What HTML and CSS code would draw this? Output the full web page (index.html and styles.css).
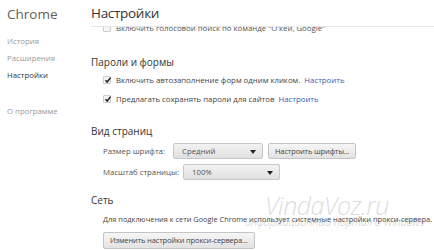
FILE: index.html
```html
<!DOCTYPE html>
<html lang="ru">
<head>
<meta charset="utf-8">
<link rel="stylesheet" href="styles.css">
</head>
<body>
<div class="page">
  <nav class="side">
    <div class="brand">Chrome</div>
    <div class="nav-item">История</div>
    <div class="nav-item">Расширения</div>
    <div class="nav-item active">Настройки</div>
    <div class="nav-item about">О программе</div>
  </nav>
  <main class="main">
    <header class="head">Настройки</header>
    <div class="clip">
      <div class="row cut"><span class="cb"></span><span>Включить голосовой поиск по команде "О'кей, Google"</span></div>
    </div>
    <section class="sec pw">
      <h2 class="sec-title">Пароли и формы</h2>
      <div class="row r1"><span class="cb on"><svg viewBox="0 0 8 8" width="8" height="8"><path d="M1.5 4.2 L3.2 6 L6.6 1.6" fill="none" stroke="#222" stroke-width="1.5"/></svg></span><span>Включить автозаполнение форм одним кликом.</span><a class="link">Настроить</a></div>
      <div class="row r2"><span class="cb on"><svg viewBox="0 0 8 8" width="8" height="8"><path d="M1.5 4.2 L3.2 6 L6.6 1.6" fill="none" stroke="#222" stroke-width="1.5"/></svg></span><span>Предлагать сохранять пароли для сайтов</span><a class="link">Настроить</a></div>
    </section>
    <section class="sec view">
      <h2 class="sec-title">Вид страниц</h2>
      <div class="frow f1"><span class="lbl">Размер шрифта:</span><span class="sel s1">Средний<i class="arr"></i></span><span class="btn">Настроить шрифты...</span></div>
      <div class="frow f2"><span class="lbl">Масштаб страницы:</span><span class="sel s2">100%<i class="arr"></i></span></div>
    </section>
    <section class="sec net">
      <h2 class="sec-title">Сеть</h2>
      <div class="desc">Для подключения к сети Google Chrome использует системные настройки прокси-сервера.</div>
      <span class="btn proxy">Изменить настройки прокси-сервера...</span>
      <div class="wm">
        <div class="wm-big">VindaVoz.ru</div>
        <div class="wm-small">информационный портал о Windows</div>
      </div>
    </section>
  </main>
</div>
</body>
</html>
```
FILE: styles.css
```css
* { box-sizing: border-box; }
html, body { margin: 0; padding: 0; background: #fff; }
body { width: 434px; height: 250px; overflow: hidden; font-family: "Open Sans", "Noto Sans", sans-serif; color: #333; }
.page { display: flex; height: 250px; }
.side { width: 91px; flex: none; padding-left: 7px; }
.brand { font-size: 13.5px; line-height: 20px; color: #606060; margin-top: 4px; height: 20px; }
.nav-item { font-size: 7.8px; line-height: 17px; color: #999; }
.side .nav-item:nth-of-type(2) { margin-top: 9px; }
.nav-item.active { color: #333; }
.nav-item.about { margin-top: 19px; }
.main { flex: 1; position: relative; }
.head { font-size: 13.5px; line-height: 27px; height: 27px; border-bottom: 1px solid #e6e6e6; color: #333; letter-spacing: -0.3px; }
.clip { height: 8px; overflow: hidden; }
.row { display: flex; align-items: center; font-size: 7.8px; color: #444; height: 19px; padding-left: 12px; white-space: nowrap; }
.row.cut { margin-top: -6px; height: 14px; color: #555; }
.cb { width: 8px; height: 8px; border: 1px solid #ccc; border-radius: 1px; margin-right: 5px; display: inline-flex; background: #f4f4f4; position: relative; flex: none; }
.cb svg { position: absolute; left: 0; top: -1px; }
.link { color: #3a5bb0; margin-left: 4px; }
.sec-title { font-size: 10px; font-weight: normal; margin: 0; line-height: 16px; color: #333; }
.pw { margin-top: 19px; }
.view { margin-top: 15px; }
.frow { display: flex; align-items: center; font-size: 7.8px; color: #444; padding-left: 12px; height: 17px; white-space: nowrap; }
.f1 { margin-top: 3px; }
.f2 { margin-top: 4px; }
.lbl { color: #555; }
.sel { display: inline-flex; align-items: center; height: 16px; border: 1px solid #c8c8c8; border-radius: 2px; background: linear-gradient(#f2f2f2, #e0e0e0); padding-left: 8px; position: relative; color: #555; flex: none; }
.s1 { width: 90px; margin-left: 8px; }
.s2 { width: 97px; margin-left: 4px; }
.arr { position: absolute; right: 6px; top: 6px; width: 0; height: 0; border-left: 3px solid transparent; border-right: 3px solid transparent; border-top: 4px solid #222; }
.btn { display: inline-flex; align-items: center; height: 16px; border: 1px solid #c4c4c4; border-radius: 2px; background: linear-gradient(#f6f6f6, #e2e2e2); padding: 0 6px; color: #444; font-size: 7.5px; letter-spacing: -0.15px; margin-left: 5px; }
.net { margin-top: 12px; position: relative; }
.desc { font-size: 7.4px; color: #444; padding-left: 12px; line-height: 14px; margin-top: 4px; white-space: nowrap; }
.proxy { margin-left: 12px; margin-top: 2px; height: 17px; }
.wm { position: absolute; left: 174px; top: -1px; pointer-events: none; }
.wm-big { font-family: "Open Sans", sans-serif; font-size: 25px; font-weight: 300; font-style: italic; color: rgba(150,150,150,0.35); line-height: 28px; letter-spacing: -0.5px; }
.wm-small { font-size: 10.5px; font-style: italic; font-weight: 300; color: rgba(140,140,140,0.5); margin-left: -20px; line-height: 14px; margin-top: -4px; white-space: nowrap; }
```
